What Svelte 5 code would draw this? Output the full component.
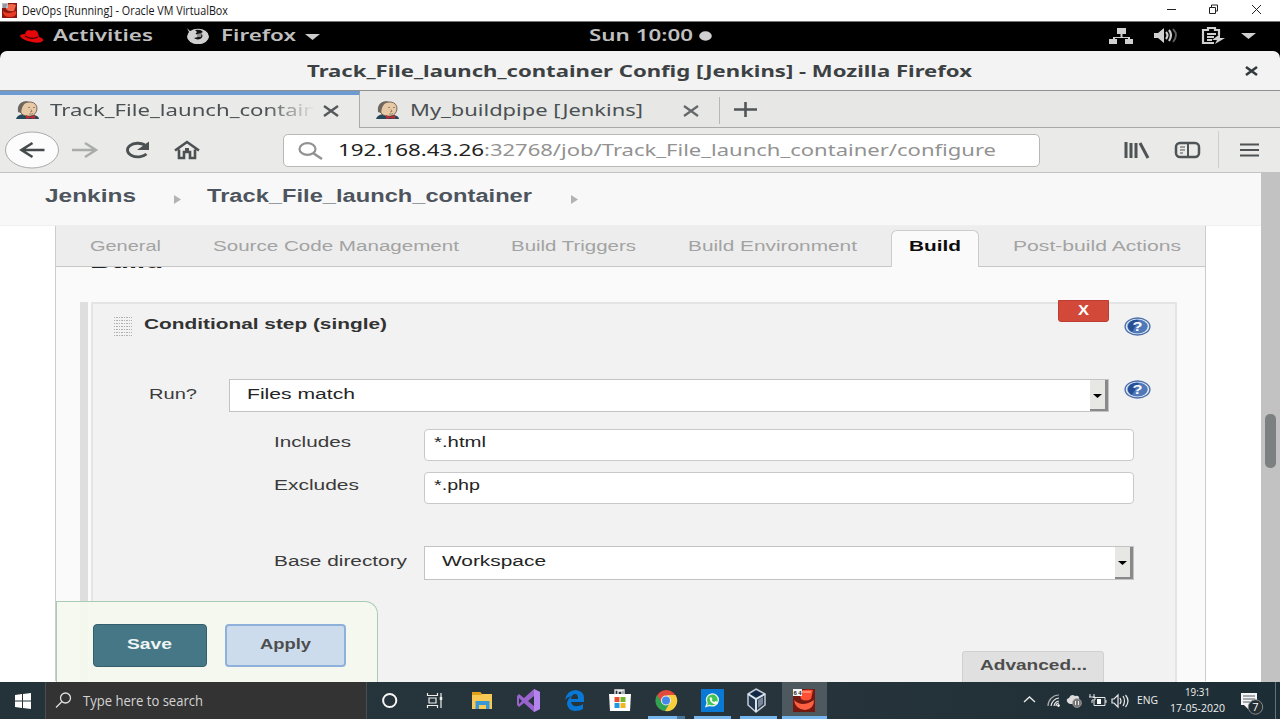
<script>
  const tabs = [
    { name: 'General', width: 71, gap: 52 },
    { name: 'Source Code Management', width: 246, gap: 52 },
    { name: 'Build Triggers', width: 125, gap: 52 },
    { name: 'Build Environment', width: 169, gap: 34 }
  ];
</script>

{#snippet label(text, width, kind)}
  <svg class="label {kind}" {width} height="20"><text x="0" y="15" textLength={width} lengthAdjust="spacingAndGlyphs">{text}</text></svg>
{/snippet}

{#snippet jenkins()}
  <svg class="butler" width="24" height="19" viewBox="0 0 24 19">
    <path d="M0 18 Q1 14 7 13 L18 14 Q23 15 23 18Z" fill="#25485a" />
    <path d="M3 7 Q3 1 10 1 L15 1 Q21 2 21 8 Q20 14 15 15 Q8 16 5 12Z" fill="#e8c9a6" stroke="#594c43" stroke-width=".8" />
    <path d="M2 11 Q1 5 5 2 Q9 -1 13 1 Q8 2 7 5 L6 7 5 12Z" fill="#6e675f" />
    <path d="M12 6.500h2m3 0h2m-4 2 1 2-2 .500m-1 2q3 .500 4-.500" stroke="#8a6d58" stroke-width=".8" fill="none" />
    <path d="M10 14 14 16 19 14V18L14 17 10 18Z" fill="#c22a31" />
  </svg>
{/snippet}

{#snippet help()}
  <svg class="help" width="27" height="19" viewBox="0 0 27 19">
    <ellipse cx="13.5" cy="9.5" rx="12.4" ry="8.500" fill="#dfe8f5" stroke="#4d70ab" stroke-width="1.400" />
    <ellipse cx="13.5" cy="9.5" rx="10.2" ry="6.900" fill="#4f79b8" />
    <path d="M5 6Q9 2 15 3L8 15Q2 12 5 6" fill="#274f93" />
    <text x="13.5" y="14.2" text-anchor="middle" textLength="10" lengthAdjust="spacingAndGlyphs">?</text>
  </svg>
{/snippet}

{#snippet picker(text, width)}
  <div class="select">
    {@render label(text, width, 'value')}
    <span class="arrow"><svg width="9" height="4"><path d="M0 0H9L4.500 4Z" /></svg></span>
  </div>
{/snippet}

<div class="screen">
  <header class="vmbar">
    <svg class="vmicon" width="15" height="15" viewBox="0 0 15 15">
      <rect width="15" height="15" fill="#8c1710" /><path d="M4 2Q10 0 14 2L12 8Q6 9 4 6Z" fill="#f0674b" /><path d="M1 8Q5 12 14 8Q15 14 8 14 Q1 14 1 8" fill="#e93b24" /><rect width="6" height="5" fill="#b8bfc6" /><path d="M1 2h4M1 4h3" stroke="#555" stroke-width=".7" />
    </svg>
    {@render label('DevOps [Running] - Oracle VM VirtualBox', 206, 'win')}
    <svg class="wincontrols" width="96" height="20" viewBox="0 0 96 20" fill="none" stroke="#222">
      <path d="M-1 9.500h9M41.500 7.500h6v6h-6zM43.500 7v-2h6v6h-2M84 5l9 9m0-9-9 9" />
    </svg>
  </header>

  <div class="gnome">
    <svg class="hat" width="25" height="15" viewBox="0 0 25 15"><path d="M6 7Q6 1 10 1 12 2 15 1 19 1 20 8 25 9 24 12 21 15 13 13 3 11 1 7 1 5 6 5Z" fill="#e5070a" /><path d="M6 7Q12 11 19 8" stroke="#380204" fill="none" stroke-width="1.200" /></svg>
    {@render label('Activities', 100, 'top')}
    <svg class="fox" width="24" height="17" viewBox="0 0 24 17"><ellipse cx="12" cy="8.500" rx="11" ry="7.700" fill="#d0d0d0" /><path d="M9 2Q15 1 17 4L15 5Q18 8 15 10.500 11 12.500 8 10L12 9 13 7 9.500 6 11 4Z" fill="#111" /><path d="M1 0 4 3 7 3 4 6Z" fill="#d0d0d0" /><path d="M11 6 16 5 15 9 11 9Z" fill="#8d8d8d" /></svg>
    {@render label('Firefox', 75, 'top')}
    <svg class="down" width="15" height="6"><path d="M0 0H15L7.500 6Z" fill="#ccc" /></svg>
    <div class="clock">{@render label('Sun 10:00', 104, 'top')}<svg width="13" height="10"><ellipse cx="6.500" cy="5" rx="6.300" ry="4.700" fill="#d0d0d0" /></svg></div>
    <svg class="status" width="148" height="20" viewBox="0 0 148 20">
      <g fill="#d0d0d0"><path d="M8 2h9v6h-3.500v3h7.500v2h3v5h-8v-5h3v-1H6v1h2v5H0v-5h4v-2h7.500V8H8zM45 7h4l6-5v15l-6-5h-4z" /><path d="M132 7h15l-7.500 6z" /></g>
      <path d="M57 6q3 3 0 7M60 4q4 5 0 11" fill="none" stroke="#ccc" stroke-width="2.200" /><path d="M64 3q6 6 0 13" fill="none" stroke="#606060" stroke-width="1.800" />
      <path d="M110 9V4h-4V2h-7v2h-5v13h11M98 8h9m-9 3h7m-7 3h5" fill="none" stroke="#d0d0d0" stroke-width="2.200" /><path d="m111 8-8 6h5l-2 4 10-6h-5z" fill="#d0d0d0" />
    </svg>
  </div>

  <div class="titlebar">
    {@render label('Track_File_launch_container Config [Jenkins] - Mozilla Firefox', 665, 'title')}
    <svg class="close" width="13" height="10"><path d="m1 1 11 8m0-8L1 9" stroke="#333a3d" stroke-width="2.600" /></svg>
  </div>

  <div class="tabstrip">
    <div class="btab active">
      {@render jenkins()}
      <div class="fade">{@render label('Track_File_launch_contain', 267, 'ff')}</div>
      <svg width="16" height="12"><path d="m1 1 14 10m0-10L1 11" stroke="#55595b" stroke-width="2.400" /></svg>
    </div>
    <div class="btab second">
      {@render jenkins()}
      {@render label('My_buildpipe [Jenkins]', 233, 'ff')}
      <svg class="x2" width="16" height="12"><path d="m1 1 14 10m0-10L1 11" stroke="#65686a" stroke-width="2.200" /></svg>
    </div>
    <svg class="plus" width="23" height="17"><path d="M0 8.500h23M11.500 1v15" stroke="#515658" stroke-width="2.600" /></svg>
  </div>

  <div class="toolbar">
    <svg class="navicons" width="205" height="40" viewBox="0 0 205 40">
      <ellipse cx="27" cy="20" rx="26.500" ry="18" fill="#fcfcfc" stroke="#aaa" />
      <path d="M39.500 20H16.500m11-7-11 7 11 7" fill="none" stroke="#44494b" stroke-width="2.600" />
      <path d="M67 20h24m-11-7 11 7-11 7" fill="none" stroke="#aaacac" stroke-width="2.400" />
      <path d="M141.500 24A10.500 6.800 0 1 1 140 15" fill="none" stroke="#4b5052" stroke-width="2.800" /><path d="M144 11.500v8.500h-12z" fill="#4b5052" />
      <path d="m170 20.500 12-8.500 12 8.500m-20-1v8.500h5v-6h6v6h5v-8.500" fill="none" stroke="#4b5052" stroke-width="2.600" /><path d="M180 18h4v4h-4z" fill="#4b5052" />
    </svg>
    <div class="url">
      <svg width="26" height="20"><ellipse cx="9.500" cy="7" rx="8" ry="5.800" fill="none" stroke="#929292" stroke-width="2.200" /><path d="m15 11 9 6" stroke="#929292" stroke-width="2.600" /></svg>
      {@render label('192.168.43.26', 146, 'host')}
      {@render label(':32768/job/Track_File_launch_container/configure', 512, 'path')}
    </div>
    <svg class="menus" width="136" height="40" viewBox="0 0 136 40" fill="none" stroke="#4e5355">
      <path d="M2 12v16M7 13v15M12 13v15" stroke-width="3" /><path d="m16 13 8 15" stroke-width="3" />
      <rect x="52" y="13" width="23" height="14" rx="4" stroke-width="2.500" /><path d="M64 13v14" stroke-width="2" /><path d="M56 17h5m-5 3h5m-5 3h3" stroke-width="1.200" />
      <path d="M94.500 1v37" stroke="#cfcfcd" /><path d="M116 14.500h19m-19 5.500h19m-19 5.500h19" stroke-width="2.200" />
    </svg>
  </div>

  <main class="viewport">
    <div class="page">
      <nav class="crumbs">
        {@render label('Jenkins', 91, 'crumb')}
        <svg width="7" height="9"><path d="M0 0v9l7-4.500z" fill="#b2b3b5" /></svg>
        {@render label('Track_File_launch_container', 325, 'crumb')}
        <svg width="7" height="9"><path d="M0 0v9l7-4.500z" fill="#b2b3b5" /></svg>
      </nav>
      <div class="panel">
        <div class="configtabs">
          {#each tabs as tab}
            <span class="ctab" style:margin-right="{tab.gap}px">{@render label(tab.name, tab.width, 'tab')}</span>
          {/each}
          <span class="current">{@render label('Build', 52, 'tabon')}</span>
          {@render label('Post-build Actions', 168, 'tab')}
        </div>
        <div class="heading">{@render label('Build', 73, 'section')}</div>
        <div class="step">
          <div class="rail"></div>
          <div class="card">
            <div class="cardhead">
              <span class="grip"></span>
              {@render label('Conditional step (single)', 243, 'strong')}
              <button class="delete">{@render label('X', 11, 'del')}</button>
              {@render help()}
            </div>
            <div class="run">
              <span class="runlabel">{@render label('Run?', 48, 'body')}</span>
              {@render picker('Files match', 108)}
              {@render help()}
            </div>
            <div class="fields">
              {@render label('Includes', 77, 'body')}
              <div class="input">{@render label('*.html', 52, 'value')}</div>
              {@render label('Excludes', 85, 'body')}
              <div class="input">{@render label('*.php', 46, 'value')}</div>
            </div>
            <div class="fields base">
              {@render label('Base directory', 133, 'body')}
              {@render picker('Workspace', 104)}
            </div>
            <button class="advanced">{@render label('Advanced...', 107, 'adv')}</button>
          </div>
        </div>
      </div>
      <div class="savebar">
        <button class="save">{@render label('Save', 45, 'savetext')}</button>
        <button class="apply">{@render label('Apply', 51, 'applytext')}</button>
      </div>
    </div>
    <div class="scroll"><span></span></div>
  </main>

  <footer class="taskbar">
    <div class="start"><svg width="16" height="16"><path d="M0 2 7 1v6.500H0zM8 1l8-1v7.500H8zM0 8.500h7V15l-7-1zM8 8.500h8V16l-8-1z" fill="#fff" /></svg></div>
    <div class="search">
      <svg width="16" height="17"><circle cx="9.500" cy="7" r="5" fill="none" stroke="#e0e0e0" stroke-width="1.300" /><path d="m6 10.500-6 6" stroke="#e0e0e0" stroke-width="1.300" /></svg>
      {@render label('Type here to search', 120, 'searchtext')}
    </div>
    <svg class="apps" width="460" height="37" viewBox="367 682 460 37">
      <circle cx="389.700" cy="700.500" r="6.600" fill="none" stroke="#f6f6f6" stroke-width="2" />
      <g fill="none" stroke="#eee" stroke-width="1.200"><path d="M427.500 693v2.500h10V693M427.500 708v-2.500h10v2.500M429 698h7v5h-7zM441 693v15" /><path d="M441 697v3" stroke-width="2.500" /></g>
      <path d="M472 692h8l2 2h10v15h-20z" fill="#f8c955" /><path d="M472 692h8l2 3h-10z" fill="#dda218" /><path d="M475.500 701h14v8h-3.500v-4h-7v4h-3.500z" fill="#3997d6" />
      <path d="m534 689 6 3v17l-6 3-10-9-5 4-2-2v-9l2-2 5 4zM534 696l-6 5 6 5zM519 698v6l3-3z" fill="#9963ce" fill-rule="evenodd" /><path d="m534 689 6 3v17l-6 3z" fill="#b583ed" />
      <path d="M565 700q2-10 11-10 8 1 8 8v4h-13q1 5 7 4 3 0 5-2v5q-3 2-8 2-8-1-8-8 1-5 5-7-5 1-7 4M571 699h7q0-5-3-5t-4 5" fill="#0878d4" fill-rule="evenodd" />
      <path d="M609 694h22l-1 17h-20z" fill="#fff" /><path d="M615 695v-5h9v5M618 694v-3h4v3" stroke="#eee" fill="none" stroke-width="1.300" />
      <path fill="#e74d32" d="M614.500 697h5v5h-5z" /><path fill="#71b52b" d="M620.500 697h5v5h-5z" /><path fill="#2298dd" d="M614.500 703h5v5h-5z" /><path fill="#f5b51e" d="M620.500 703h5v5h-5z" />
      <circle cx="666.300" cy="700.500" r="10.500" fill="#e24a3b" /><path d="M657 695A10.500 10.500 0 0 0 665 711L670 704 662 703Z" fill="#30a353" /><path d="M675.500 695A10.500 10.500 0 0 1 665 711L671 701 667 695Z" fill="#f8ce3d" /><circle cx="666" cy="700.500" r="5" fill="#eee" /><circle cx="666" cy="700.500" r="4" fill="#4489e9" />
      <rect x="701" y="689" width="23" height="23" fill="#0979d5" /><path d="m706 706.500 1.200-3.500a6 6 0 1 1 2.500 2.300z" fill="#42c453" stroke="#e7f6e8" stroke-width="1.300" /><path d="M709.500 698q2-2 3 1l-1 1q1 2 3 2l1-1 2 1q0 2-2 2-5 0-6-6" fill="#fff" />
      <path d="m756 689 9 5v11l-9 7-8-7v-11z" fill="#25354b" stroke="#c3ccd9" stroke-width="1.500" /><path d="m748 694 8 5 9-5m-9 5v13" stroke="#d9e4ef" fill="none" stroke-width="2" /><path d="m751 694 5-3 6 3-6 3z" fill="#112947" /><path d="m758 700 5-3v7l-5 4z" fill="#778797" />
      <rect x="782" y="682" width="45" height="37" fill="#4e595f" /><rect x="793" y="689" width="22" height="23" fill="#741912" /><path d="M799 691q7-2 14-1l-2 9q-5 3-10 0z" fill="#ff5035" /><path d="M794 700q8 8 20 0 0 9-9 10-10-1-11-10" fill="#ff6041" /><path d="M802 692h9" stroke="#ffbd99" /><rect x="793" y="689" width="9" height="7" fill="#f5f5f5" /><text x="793.500" y="695" textLength="8" class="badge">64</text>
      <path d="M648 717.500h37M694 717.500h37M740 717.500h37M782 717.500h45" stroke="#75b6ee" stroke-width="3" /><path d="M677 717.500h8" stroke="#49779c" stroke-width="3" />
    </svg>
    <div class="tray">
      <svg width="106" height="22" viewBox="0 0 106 22" fill="none" stroke="#e8e8e8">
        <path d="m-1 13 5.500-5 5.500 5" stroke-width="1.400" /><g stroke-width="1.200"><path d="M23 17A11 11 0 0 1 34 6" stroke="#aaa" /><path d="M26 17a9 9 0 0 1 8-8M29 17a6 6 0 0 1 5-5M31 17a3 3 0 0 1 3-3" /></g><circle cx="33.500" cy="16.500" r="1" fill="#fff" />
        <path d="M43 14q-3-4 1-5 2-5 6-2 5-1 4 4v4h-9z" fill="#ddd" stroke="none" /><circle cx="52" cy="14" r="4.500" fill="#777" stroke="#aaa" stroke-width=".6" /><path d="M50.500 12v4m3-4v4" />
        <path d="M68 8.500h12v8H69v-5M81 11v3" /><path d="M72 10h4v5h-4z" fill="#fff" stroke="none" /><path d="M65 5v3m4-3v3m-5 0h6v3h-3v3" />
        <path d="M87 10h2l4-4v12l-4-4h-2zM95 9q2 3 0 6M98 7q3 5 0 10M100.500 6q5 6 0 12" stroke-width="1.200" />
      </svg>
      {@render label('ENG', 21, 'traytext')}
      <div class="date">{@render label('19:31', 25, 'traytext')}{@render label('17-05-2020', 55, 'traytext')}</div>
      <svg class="notify" width="23" height="26"><path d="M1 1h16v12H8v4l-4-4H1z" fill="#f4f4f4" /><path d="M3 4h12M3 7h12M3 10h7" stroke="#536066" /><circle cx="15.500" cy="15" r="7.200" fill="#252e33" stroke="#848a8d" /><text x="15.500" y="19" text-anchor="middle">7</text></svg>
    </div>
    <span class="peek"></span>
  </footer>
</div>

<style>
  :global(body) { margin: 0; overflow: hidden; }
  .screen, .screen * { box-sizing: border-box; }
  .screen { width: 1280px; height: 719px; display: flex; flex-direction: column; overflow: hidden; background: #fff; }
  svg { display: block; flex: none; overflow: visible; }
  button { padding: 0; font: inherit; }
  .label { font: 15.500px "Liberation Sans", Arial, sans-serif; fill: #3b3b3b; }
  .value { fill: #242424; }
  .win { font: 12px "Open Sans", sans-serif; fill: #161616; }
  .top { font: 600 16px "Noto Sans", sans-serif; fill: #bfbfbf; }
  .title { font: 700 16px "Noto Sans", sans-serif; fill: #3c4143; }
  .ff, .host, .path { font: 16px "Noto Sans", sans-serif; fill: #4b5052; }
  .host { fill: #222; }
  .path { fill: #929292; }
  .crumb { font-size: 17.500px; font-weight: 700; fill: #4d545d; }
  .tab { fill: #a3a3a3; }
  .tabon { font-weight: 700; fill: #0c0c0c; }
  .section { font-size: 20px; font-weight: 700; fill: #222; }
  .strong { font-weight: 700; fill: #333; }
  .del { font-weight: 700; font-size: 14px; fill: #fff; }
  .adv, .applytext { font-weight: 700; font-size: 15px; fill: #4d4d4d; }
  .savetext { font-weight: 700; font-size: 15px; fill: #eef4f4; }
  .searchtext { font: 14px "Open Sans", sans-serif; fill: #d4d4d4; }
  .traytext { font: 11.500px "Open Sans", sans-serif; fill: #f0f0f0; }

  .vmbar { flex: none; height: 22px; display: flex; padding: 0 16px 0 2px; border-bottom: 1px solid #777; background: #fff; }
  .vmicon { margin: 3px 5px 0 0; }
  .wincontrols { margin-left: auto; }
  .gnome { flex: none; height: 29px; display: flex; align-items: flex-start; padding: 4px 0 0 19px; background: #000; }
  .hat { margin: 3px 9px 0 0; }
  .fox { margin: 2px 11px 0 33px; }
  .down { margin: 8px 0 0 9px; }
  .clock { display: flex; margin-left: 269px; }
  .clock > :global(svg:last-child) { margin: 5px 0 0 6px; }
  .status { margin: 0 0 0 397px; }
  .titlebar { flex: none; height: 40px; display: flex; align-items: flex-start; padding: 11px 22px 0 307px; border-bottom: 1px solid #91918f; border-radius: 7px 7px 0 0; background: #f3f3f3; box-shadow: 0 -7px 0 #000, 0 -3px 0 #000; }
  .close { margin: 4px 0 0 auto; }
  .tabstrip { flex: none; height: 37px; display: flex; background: #e7e7e6; border-bottom: 1px solid #a9a9a8; }
  .btab { display: flex; padding: 10px 0 0 16px; }
  .active { width: 360px; height: 37px; border-top: 4px solid #6c9bd2; border-right: 1px solid #a9a9a8; background: #eaeae9; padding-top: 6px; }
  .butler { margin: 0 10px 0 0; }
  .fade { width: 263px; margin-right: 9px; overflow: hidden; -webkit-mask-image: linear-gradient(90deg, #000 215px, transparent 265px); mask-image: linear-gradient(90deg, #000 215px, transparent 265px); }
  .active > :global(svg:last-child) { margin: 4px 0 0 1px; }
  .second { width: 360px; height: 27px; border-right: 1px solid #b7b7b5; margin-top: 6px; padding-top: 4px; }
  .x2 { margin: 4px 0 0 40px; }
  .plus { margin: 10px 0 0 14px; }
  .toolbar { flex: none; height: 45px; display: flex; align-items: flex-start; padding: 2px 20px 0 5px; background: #eaeae9; border-bottom: 1px solid #c3c3c2; }
  .url { width: 757px; height: 33px; margin: 4px 0 0 73px; padding: 7px 0 0 14px; display: flex; background: #fff; border: 1px solid #b8b8b7; border-radius: 5px; }
  .url .label { margin-top: -1px; }
  .url > svg:first-child { margin: 0 14px 0 0; }
  .menus { margin-left: auto; }

  .viewport { flex: none; height: 509px; display: flex; }
  .page { width: 1261px; height: 509px; overflow: hidden; background: #fff; }
  .scroll { width: 19px; background: #c1c2c1; padding: 241px 0 0 4px; }
  .scroll span { display: block; width: 11px; height: 54px; border-radius: 5px; background: #7d8080; }
  .crumbs { height: 53px; display: flex; padding: 14px 0 0 45px; background: #f8f8f8; border-bottom: 1px solid #edf0f2; }
  .crumbs > svg:nth-child(2) { margin: 7.500px 26px 0 38px; }
  .crumbs > svg:nth-child(4) { margin: 7.500px 0 0 39px; }
  .panel { width: 1151px; height: 455px; margin-left: 55px; border: solid #ccc; border-width: 0 1px; background: #fafafa; }
  .configtabs { height: 41px; display: flex; padding: 10px 0 0 34px; background: #ededed; border-bottom: 1px solid #c7c7c7; }
  .current { width: 88px; height: 37px; margin: -6px 34px 0 0; padding: 5px 0 0 17px; background: #fafafa; border: 1px solid #ccc; border-bottom: 0; border-radius: 6px 6px 0 0; }
  .heading { height: 35px; padding-left: 34px; overflow: hidden; }
  .heading .label { margin-top: -14px; }
  .step { height: 400px; display: flex; padding: 0 28px 0 24px; }
  .rail { width: 8px; margin-right: 3px; background: #dedede; }
  .card { width: 1087px; border: 2px solid #e4e4e4; border-bottom: 0; background: #f2f2f2; }
  .cardhead { height: 74px; display: flex; padding: 10px 0 0 20px; }
  .grip { width: 18px; height: 20px; margin: 3px 12px 0 1px; background: repeating-linear-gradient(90deg, transparent 0 1px, #f2f2f2 1px 2px, transparent 2px 4px, #f2f2f2 4px 5px), repeating-linear-gradient(#b0b0b0 0 1px, #f2f2f2 1px 3px); }
  .delete { width: 51px; height: 22px; margin: -14px 15px 0 671px; padding: 0 0 0 19px; background: #d24939; border: 1px solid #bd3e30; border-radius: 0 0 3px 3px; }
  .delete .label { margin-top: -2px; }
  .help { margin-top: -1px; }
  .cardhead .help { margin-top: 3px; }
  .help text { font: 700 13px "Liberation Sans", sans-serif; fill: #fff; }
  .run { height: 50px; display: flex; align-items: flex-start; padding-left: 56px; }
  .runlabel { width: 80px; padding-top: 6px; }
  .select { display: flex; height: 33px; padding: 4px 0 0 17px; background: #fff; border: 1px solid #c3c3c3; }
  .run .select { width: 880px; margin: 1px 15px 0 0; }
  .run .help { margin-top: 2px; }
  .arrow { width: 18px; height: 31px; margin: -4px 0 0 auto; padding: 14px 0 0 3px; background: #e7e7e4; border: solid #898989; border-width: 0 3px 2px 0; }
  .fields { display: grid; grid-template-columns: 150px 710px; grid-auto-rows: 43px; height: 117px; padding-left: 181px; }
  .fields > .label { margin-top: 4px; }
  .input { height: 32px; margin-top: 1px; padding: 2px 0 0 9px; background: #fff; border: 1px solid #c9c9c9; border-radius: 4px; }
  .base { height: 106px; }
  .base > .label { margin-top: 6px; }
  .base .select { height: 34px; margin-top: 1px; }
  .base .arrow { height: 32px; }
  .advanced { display: block; width: 142px; height: 40px; margin-left: 869px; padding: 0 0 12px 17px; background: #e0e0e0; border: 1px solid #d0d0d0; border-radius: 3px; }
  .savebar { position: absolute; left: 56px; top: 601px; width: 322px; height: 81px; display: flex; align-items: flex-start; padding: 22px 0 0 36px; gap: 18px; background: rgba(244, 249, 239, .93); border: solid #a9cbb6; border-width: 1px 1px 0; border-radius: 0 13px 0 0; z-index: 2; }
  .save, .apply { height: 43px; border-radius: 4px; }
  .save { width: 114px; padding: 0 0 4px 33px; background: #467786; border: 1px solid #355f6c; }
  .apply { width: 121px; padding: 0 0 4px 33px; background: #cddced; border: 2px solid #8eb1dc; }

  .taskbar { flex: none; height: 37px; display: flex; align-items: flex-start; background: linear-gradient(90deg, #24333a, #27343b 60%, #1d2d35); position: relative; z-index: 3; }
  .start { width: 45px; padding: 11px 0 0 15px; }
  .search { width: 322px; height: 37px; display: flex; padding: 9px 0 0 10px; background: #333; border: 1px solid #4d4d4d; border-width: 0 1px; }
  .search .label { margin: 0 0 0 11px; }
  .tray { display: flex; padding-left: 198px; }
  .tray > :global(svg:first-child) { margin: 7px 6px 0 0; }
  .tray > :global(.label) { margin-top: 7px; }
  .date { width: 57px; height: 37px; display: flex; flex-direction: column; align-items: center; margin: 0 14px 0 11px; }
  .date .label { height: 17px; margin-top: -1px; }
  .notify { margin-top: 10px; }
  .notify text { font: 11px "Open Sans", sans-serif; fill: #fff; }
  .badge { font: 700 6px "Liberation Sans", sans-serif; fill: #222; }
  .peek { margin-left: auto; width: 5px; height: 37px; border-left: 1px solid #63727a; }
</style>
